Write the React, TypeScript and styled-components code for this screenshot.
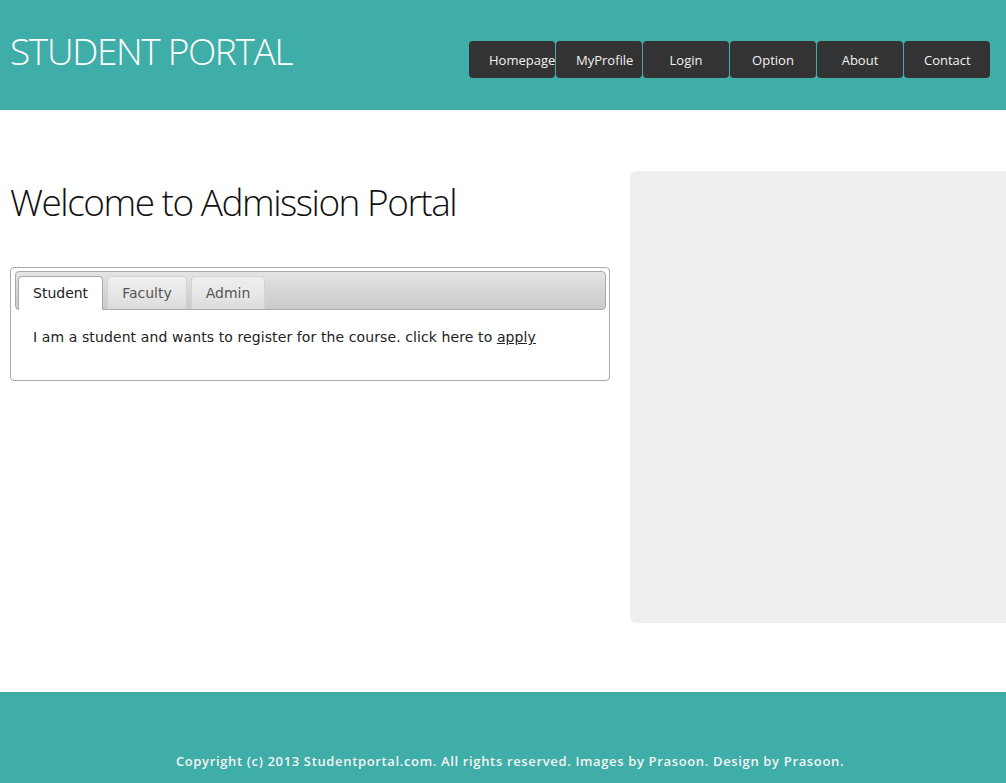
import React, { useState } from "react";
import styled, { createGlobalStyle } from "styled-components";

const Global = createGlobalStyle`
  html, body { margin: 0; padding: 0; background: #fff; }
  body { font-family: "Open Sans", "Liberation Sans", sans-serif; overflow: hidden; }
  * { box-sizing: border-box; }
`;

const TEAL = "#3fada8";

const Page = styled.div`
  width: 1006px;
  min-height: 783px;
  display: flex;
  flex-direction: column;
  overflow: hidden;
`;

const Header = styled.header`
  height: 110px;
  background: ${TEAL};
  display: flex;
  justify-content: space-between;
  align-items: flex-start;
  padding: 0 16px 0 10px;
`;

const Title = styled.h1`
  margin: 32px 0 0;
  font-family: "Open Sans", sans-serif;
  font-weight: 300;
  font-size: 37px;
  line-height: 38px;
  color: #fff;
  letter-spacing: -1.35px;
`;

const Nav = styled.nav`
  display: flex;
  gap: 1px;
  margin-top: 41px;
`;

const NavButton = styled.a`
  width: 86px;
  height: 37px;
  padding: 0 20px;
  background: #333333;
  border-radius: 4px;
  color: #f2f2f2;
  font-family: "Open Sans", sans-serif;
  font-size: 13px;
  line-height: 38px;
  text-align: center;
  white-space: nowrap;
  text-decoration: none;
  cursor: pointer;
`;

const Main = styled.main`
  display: flex;
  align-items: flex-start;
  gap: 20px;
  padding: 61px 0 0 10px;
  height: 582px;
`;

const LeftColumn = styled.section`
  width: 600px;
  flex: none;
`;

const Heading = styled.h2`
  margin: 12px 0 46px;
  font-family: "Open Sans", sans-serif;
  font-weight: 300;
  font-size: 37px;
  line-height: 38px;
  color: #111;
  letter-spacing: -1.5px;
`;

const TabsBox = styled.div`
  border: 1px solid #aaaaaa;
  border-radius: 4px;
  padding: 3px 3px 0 4px;
  background: #fff;
  font-family: "DejaVu Sans", Verdana, sans-serif;
`;

const TabList = styled.ul`
  list-style: none;
  margin: 0;
  padding: 4px 0 0 2px;
  height: 39px;
  display: flex;
  gap: 4px;
  border: 1px solid #aaaaaa;
  border-radius: 4px;
  background: linear-gradient(to bottom, #e4e4e4 0%, #d6d6d6 50%, #cacaca 100%);
`;

const Tab = styled.li<{ $active: boolean }>`
  height: ${(p) => (p.$active ? "34px" : "33px")};
  padding: 0 14px;
  border: 1px solid ${(p) => (p.$active ? "#aaaaaa" : "#d3d3d3")};
  border-bottom: none;
  border-radius: 4px 4px 0 0;
  background: ${(p) =>
    p.$active ? "#ffffff" : "linear-gradient(to bottom, #efefef 0%, #e6e6e6 60%, #dadada 100%)"};
  color: ${(p) => (p.$active ? "#212121" : "#555555")};
  font-size: 14px;
  line-height: 32px;
  cursor: pointer;
  position: relative;
  z-index: 1;
`;

const Panel = styled.div`
  padding: 19px 20px 34px 18px;
  font-size: 14px;
  line-height: 17px;
  color: #222;
  letter-spacing: 0.1px;
`;

const Link = styled.a`
  color: #222;
  text-decoration: underline;
`;

const SidePanel = styled.aside`
  width: 400px;
  flex: none;
  height: 452px;
  background: #efefef;
  border-radius: 6px 0 0 6px;
`;

const Footer = styled.footer`
  height: 91px;
  background: ${TEAL};
  display: flex;
  justify-content: center;
  padding: 60px 0 0 14px;
`;

const FooterText = styled.p`
  margin: 0;
  font-family: "Open Sans", sans-serif;
  font-weight: 600;
  font-size: 13px;
  line-height: 18px;
  letter-spacing: 0.65px;
  color: #f4f4f4;
`;

const navItems = ["Homepage", "MyProfile", "Login", "Option", "About", "Contact"];

const tabs = [
  {
    name: "Student",
    content: (
      <>
        I am a student and wants to register for the course. click here to <Link>apply</Link>
      </>
    ),
  },
  {
    name: "Faculty",
    content: (
      <>
        I am a faculty member. click here to <Link>login</Link>
      </>
    ),
  },
  {
    name: "Admin",
    content: (
      <>
        I am an administrator. click here to <Link>login</Link>
      </>
    ),
  },
];

export default function App() {
  const [active, setActive] = useState(0);
  return (
    <Page>
      <Global />
      <Header>
        <Title>STUDENT PORTAL</Title>
        <Nav>
          {navItems.map((n) => (
            <NavButton key={n}>{n}</NavButton>
          ))}
        </Nav>
      </Header>
      <Main>
        <LeftColumn>
          <Heading>Welcome to Admission Portal</Heading>
          <TabsBox>
            <TabList>
              {tabs.map((t, i) => (
                <Tab key={t.name} $active={i === active} onClick={() => setActive(i)}>
                  {t.name}
                </Tab>
              ))}
            </TabList>
            <Panel>{tabs[active].content}</Panel>
          </TabsBox>
        </LeftColumn>
        <SidePanel />
      </Main>
      <Footer>
        <FooterText>
          Copyright (c) 2013 Studentportal.com. All rights reserved. Images by Prasoon. Design by Prasoon.
        </FooterText>
      </Footer>
    </Page>
  );
}
